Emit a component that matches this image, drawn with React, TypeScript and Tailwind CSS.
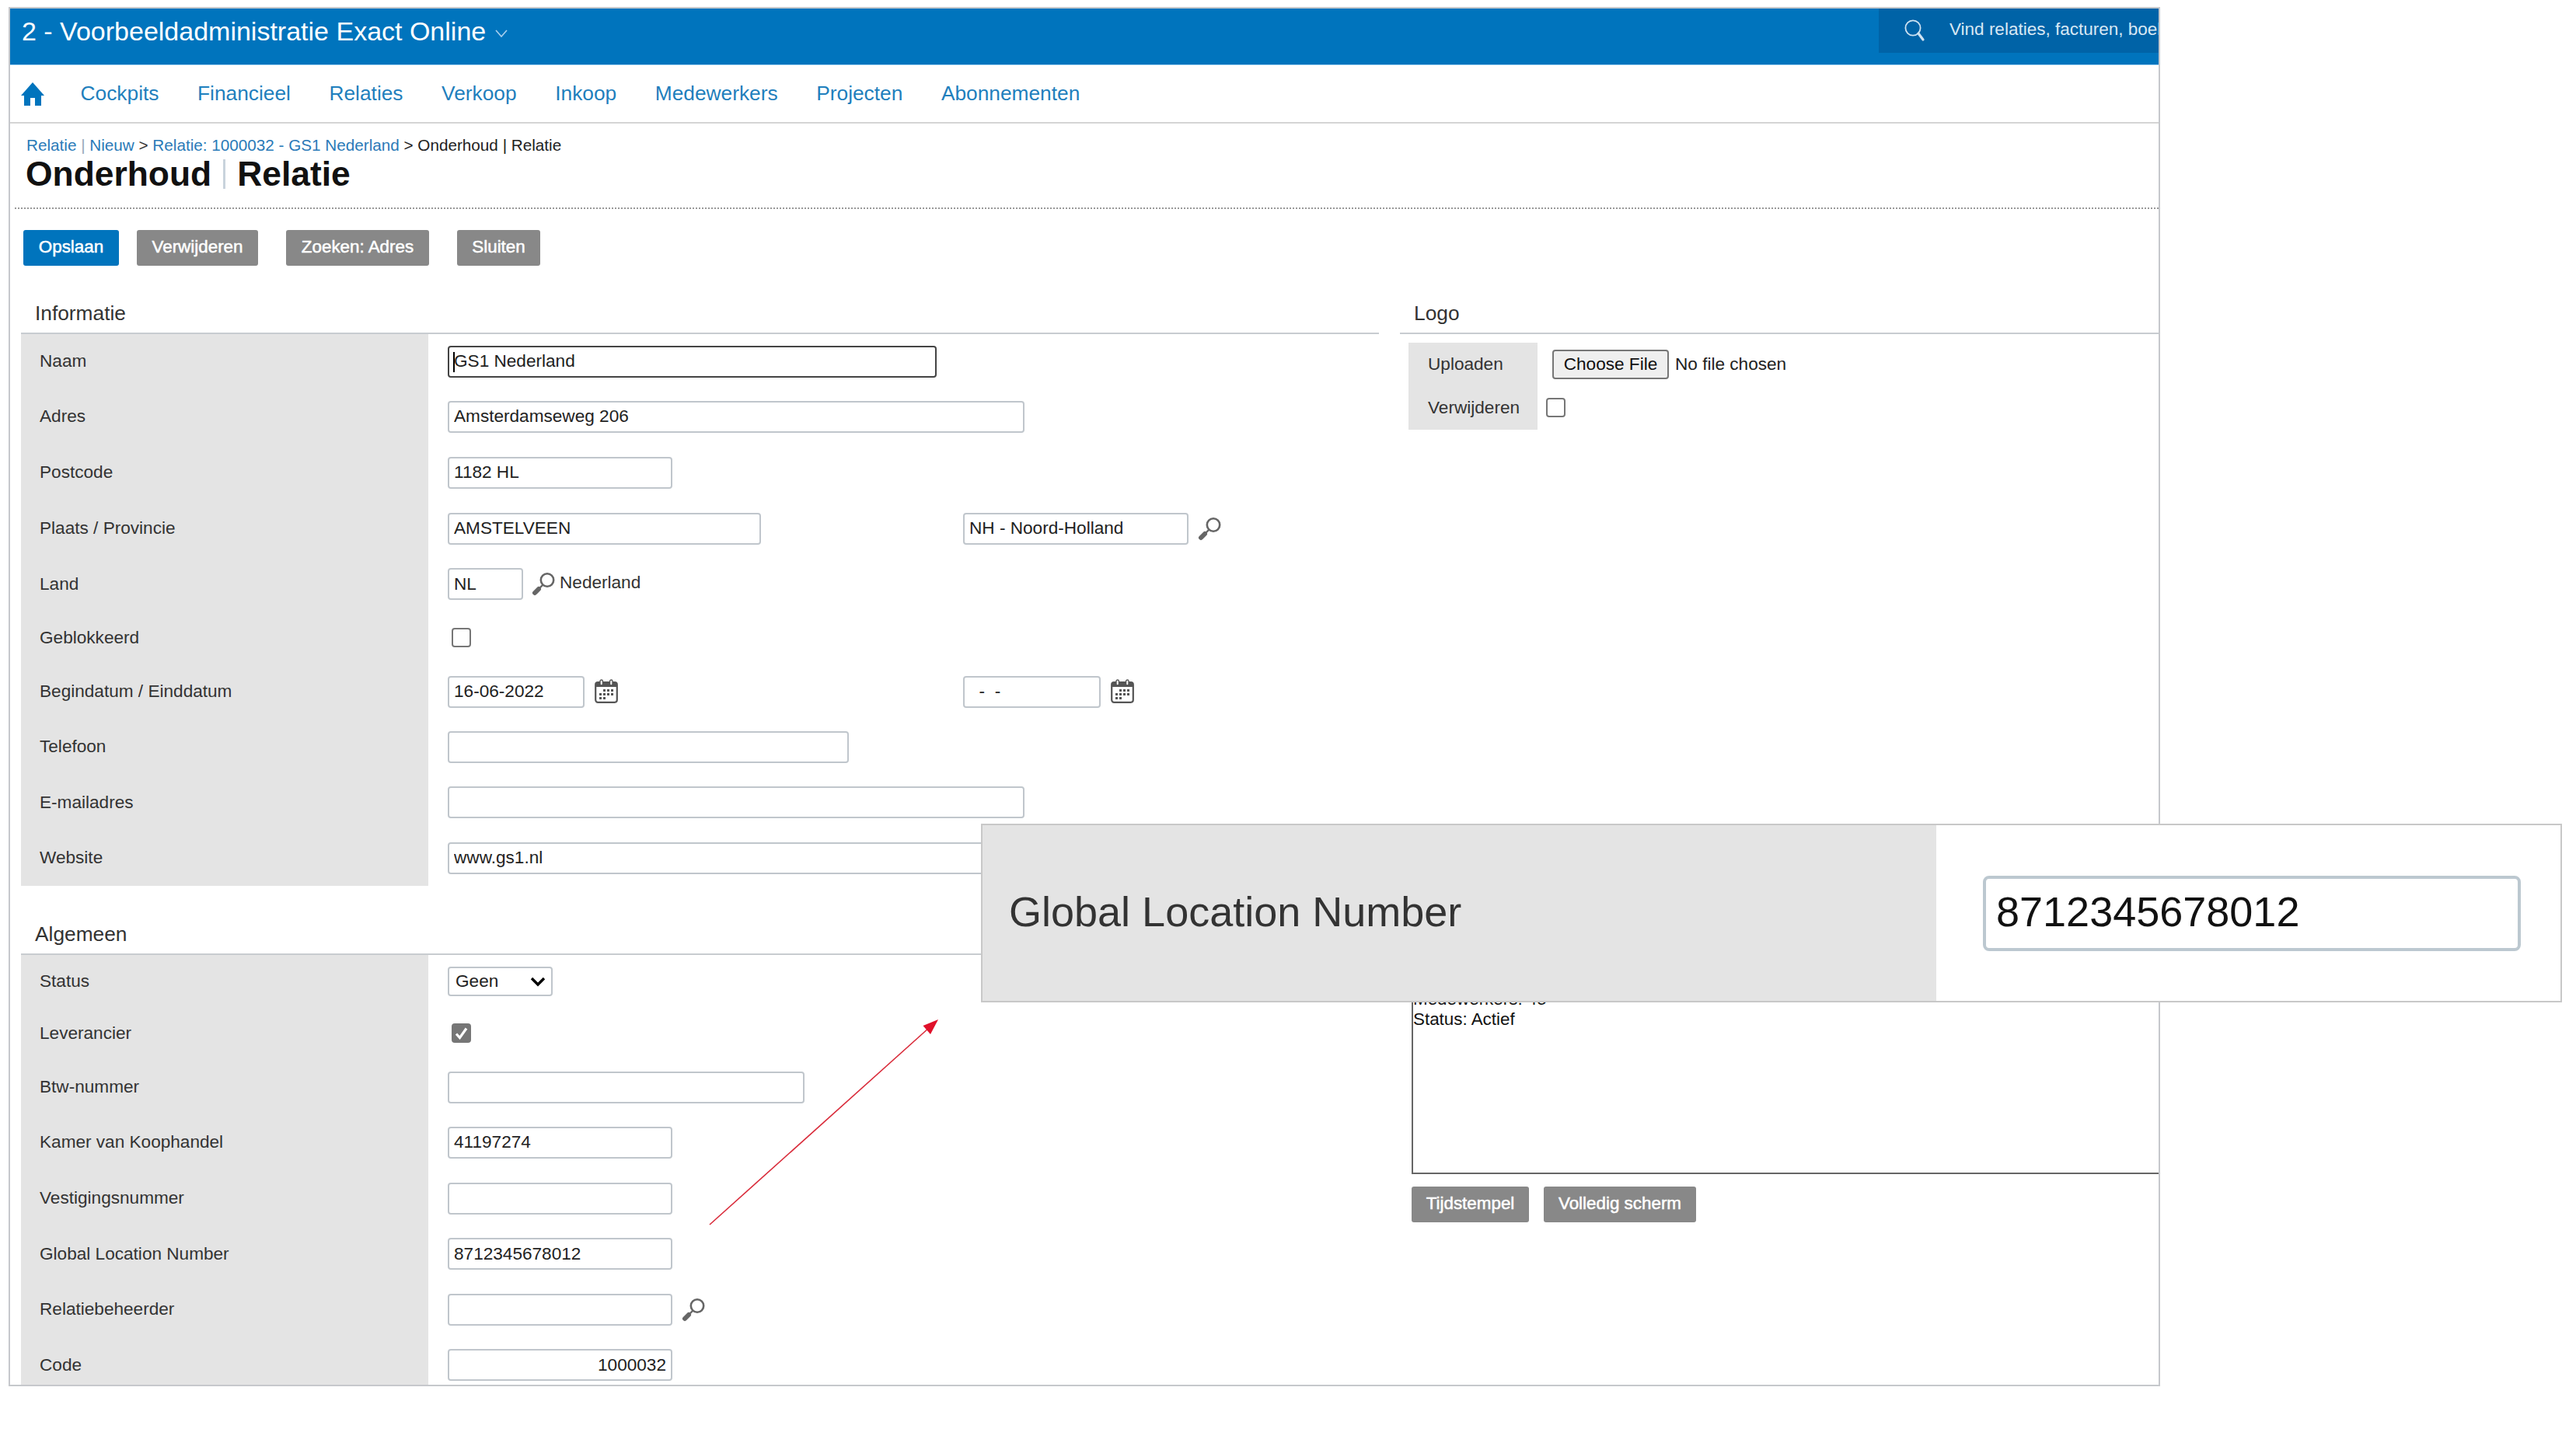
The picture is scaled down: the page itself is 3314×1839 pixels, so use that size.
import React from "react";

const Mag = () => (
  <svg width="30" height="31" viewBox="0 0 30 31" className="shrink-0">
    <circle cx="20" cy="10.5" r="8.2" fill="none" stroke="#666" strokeWidth="2.6" />
    <line x1="14" y1="17" x2="9" y2="22" stroke="#666" strokeWidth="2.4" />
    <line x1="9" y1="22" x2="4" y2="27" stroke="#666" strokeWidth="6" strokeLinecap="round" />
  </svg>
);

const Cal = () => (
  <svg width="30" height="31" viewBox="0 0 30 31" className="-mt-[1px] shrink-0">
    <rect x="1.2" y="4" width="27.6" height="25.8" rx="3" fill="none" stroke="#555" strokeWidth="2.2" />
    <rect x="1.2" y="4" width="27.6" height="6" fill="#555" />
    <rect x="7" y="1" width="3.4" height="7" rx="1.7" fill="#fff" stroke="#555" strokeWidth="1.4" />
    <rect x="19.6" y="1" width="3.4" height="7" rx="1.7" fill="#fff" stroke="#555" strokeWidth="1.4" />
    <g fill="#555">
      <rect x="11" y="13" width="3" height="3" />
      <rect x="16" y="13" width="3" height="3" />
      <rect x="21" y="13" width="3" height="3" />
      <rect x="6" y="18" width="3" height="3" />
      <rect x="11" y="18" width="3" height="3" />
      <rect x="16" y="18" width="3" height="3" />
      <rect x="21" y="18" width="3" height="3" />
      <rect x="6" y="23" width="3" height="3" />
      <rect x="11" y="23" width="3" height="3" />
    </g>
  </svg>
);

const Box = ({ checked }: { checked?: boolean }) =>
  checked ? (
    <span className="ml-[5px] -mt-[1px] flex h-[25px] w-[25px] items-center justify-center rounded-[4px] bg-[#767676]">
      <svg width="19" height="19" viewBox="0 0 19 19">
        <path d="M3 10.5 L7.5 15.5 L16 3.5" fill="none" stroke="#fff" strokeWidth="3.2" />
      </svg>
    </span>
  ) : (
    <span className="ml-[5px] -mt-[1px] block h-[25px] w-[25px] rounded-[4px] border-2 border-[#767676] bg-white" />
  );

const Field = ({ w, value, right }: { w: string; value?: string; right?: boolean }) => (
  <input
    readOnly
    value={value ?? ""}
    className={`${w} h-[41px] shrink-0 rounded-[4px] border-2 border-[#c0c6cc] bg-white pl-[6px] pr-[6px] text-[22.6px] text-[#222] outline-none ${right ? "text-right" : ""}`}
  />
);

const Row = ({ h, label, children }: { h: string; label: string; children: React.ReactNode }) => (
  <div className={`flex ${h}`}>
    <div className="flex w-[524px] shrink-0 items-center bg-[#e4e4e4] pl-[24px] text-[22.6px] text-[#333]">{label}</div>
    <div className="flex items-center pl-[25px]">{children}</div>
  </div>
);

const Section = ({ h, title }: { h: string; title: string }) => (
  <div className={`flex ${h} items-end border-b-2 border-[#c8ccd0] pb-[10px] pl-[18px] text-[26.3px] leading-[30px] text-[#333]`}>
    {title}
  </div>
);

const Btn = ({ label, blue, w }: { label: string; blue?: boolean; w: string }) => (
  <span
    className={`flex h-[46px] ${w} items-center justify-center rounded-[3px] pb-[2px] text-[22.4px] text-white [-webkit-text-stroke:0.5px_white] ${blue ? "bg-[#0074bd]" : "bg-[#888888]"}`}
  >
    {label}
  </span>
);

export default function App() {
  return (
    <div className="relative h-[1839px] w-[3314px] overflow-hidden bg-white pl-[11px] pt-[9px] [font-family:Liberation_Sans,sans-serif]">
      <div className="h-[1775px] w-[2768px] overflow-hidden border-2 border-[#c6c8cc] bg-white">
        {/* top bar */}
        <div className="flex h-[73px] items-start justify-between border-b border-[#a8d5f5] bg-[#0074bd]">
          <div className="flex h-[58px] items-center pl-[15px] text-[34px] text-white">
            <span>2 - Voorbeeldadministratie Exact Online</span>
            <svg width="16" height="10" viewBox="0 0 16 10" className="ml-[12px] mt-[6px]">
              <path d="M1 1 L8 9 L15 1" fill="none" stroke="#a8d0ee" strokeWidth="1.6" />
            </svg>
          </div>
          <div className="flex h-[57px] w-[360px] items-center overflow-hidden whitespace-nowrap bg-[#0063a7] pl-[32px] text-[22.5px] text-[#d8e8f4]">
            <svg width="30" height="32" viewBox="0 0 30 32" className="-mt-[2px] shrink-0">
              <circle cx="12" cy="13" r="9.6" fill="none" stroke="#cfe3f2" strokeWidth="1.8" />
              <line x1="19" y1="20" x2="25" y2="28" stroke="#cfe3f2" strokeWidth="3.2" strokeLinecap="round" />
            </svg>
            <span className="ml-[29px] -mt-[3px]">Vind relaties, facturen, boekingen</span>
          </div>
        </div>

        {/* nav */}
        <div className="flex h-[75px] items-center gap-[49.6px] border-b-2 border-[#d5d5d5] pl-[14px] text-[26.3px] text-[#1f7fbd]">
          <svg width="30" height="30" viewBox="0 0 30 30" className="-mr-[3px] shrink-0">
            <path d="M15 0 L30 17 H26 V30 H18 V20 H12 V30 H4 V17 H0 Z" fill="#0074bd" />
          </svg>
          {["Cockpits", "Financieel", "Relaties", "Verkoop", "Inkoop", "Medewerkers", "Projecten", "Abonnementen"].map((n) => (
            <span key={n}>{n}</span>
          ))}
        </div>

        {/* page header */}
        <div className="pl-[20px] pt-[16px]">
          <div className="pl-[1px] text-[20.7px] leading-[24px] text-[#2a7ab8]">
            Relatie <span className="text-[#9ab]">|</span> Nieuw <span className="text-[#333]">&gt;</span> Relatie: 1000032 - GS1 Nederland{" "}
            <span className="text-[#222]">&gt; Onderhoud | Relatie</span>
          </div>
          <div className="flex h-[50px] items-center text-[44.4px] font-bold text-[#111]">
            <span>Onderhoud</span>
            <span className="mx-[15px] h-[38px] w-[3px] bg-[#c9d3dc]" />
            <span>Relatie</span>
          </div>
        </div>
        <div className="ml-[6px] mt-[18px] border-b-2 border-dotted border-[#999]" />

        {/* toolbar */}
        <div className="flex pl-[17px] pt-[27px]">
          <Btn label="Opslaan" blue w="w-[123px]" />
          <span className="ml-[23px]"><Btn label="Verwijderen" w="w-[156px]" /></span>
          <span className="ml-[36px]"><Btn label="Zoeken: Adres" w="w-[184px]" /></span>
          <span className="ml-[36px]"><Btn label="Sluiten" w="w-[107px]" /></span>
        </div>

        {/* columns */}
        <div className="flex">
          <div className="ml-[14px] w-[1747px] shrink-0">
            <Section h="h-[88px]" title="Informatie" />
            <Row h="h-[70px]" label="Naam">
              <div className="relative flex h-[41px] w-[629px] items-center rounded-[4px] border-2 border-[#444] bg-white pl-[6px] text-[22.6px] text-[#222]">
                <span className="absolute left-[5px] top-[6px] h-[26px] w-[2px] bg-black" />
                GS1 Nederland
              </div>
            </Row>
            <Row h="h-[72px]" label="Adres"><Field w="w-[742px]" value="Amsterdamseweg 206" /></Row>
            <Row h="h-[72px]" label="Postcode"><Field w="w-[289px]" value="1182 HL" /></Row>
            <Row h="h-[72px]" label="Plaats / Provincie">
              <div className="w-[663px]"><Field w="w-[403px]" value="AMSTELVEEN" /></div>
              <Field w="w-[290px]" value="NH - Noord-Holland" />
              <span className="ml-[12px]"><Mag /></span>
            </Row>
            <Row h="h-[71px]" label="Land">
              <Field w="w-[97px]" value="NL" />
              <span className="ml-[11px]"><Mag /></span>
              <span className="-mt-[4px] ml-[6px] text-[22.6px] text-[#333]">Nederland</span>
            </Row>
            <Row h="h-[68px]" label="Geblokkeerd"><Box /></Row>
            <Row h="h-[70px]" label="Begindatum / Einddatum">
              <div className="flex w-[663px] items-center">
                <Field w="w-[176px]" value="16-06-2022" />
                <span className="ml-[13px]"><Cal /></span>
              </div>
              <Field w="w-[177px]" value="  -  -" />
              <span className="ml-[13px]"><Cal /></span>
            </Row>
            <Row h="h-[72px]" label="Telefoon"><Field w="w-[516px]" /></Row>
            <Row h="h-[71px]" label="E-mailadres"><Field w="w-[742px]" /></Row>
            <Row h="h-[72px]" label="Website"><Field w="w-[742px]" value="www.gs1.nl" /></Row>

            <Section h="h-[89px]" title="Algemeen" />
            <Row h="h-[67px]" label="Status">
              <div className="relative h-[38px] w-[135px]">
                <select className="h-full w-full appearance-none rounded-[4px] border-2 border-[#c0c6cc] bg-white pl-[8px] text-[22.6px] text-[#222] outline-none">
                  <option>Geen</option>
                </select>
                <svg width="20" height="13" viewBox="0 0 20 13" className="pointer-events-none absolute right-[9px] top-[13px]">
                  <path d="M2 2 L10 10 L18 2" fill="none" stroke="#000" strokeWidth="3.4" />
                </svg>
              </div>
            </Row>
            <Row h="h-[68px]" label="Leverancier"><Box checked /></Row>
            <Row h="h-[70px]" label="Btw-nummer"><Field w="w-[459px]" /></Row>
            <Row h="h-[72px]" label="Kamer van Koophandel"><Field w="w-[289px]" value="41197274" /></Row>
            <Row h="h-[72px]" label="Vestigingsnummer"><Field w="w-[289px]" /></Row>
            <Row h="h-[71px]" label="Global Location Number"><Field w="w-[289px]" value="8712345678012" /></Row>
            <Row h="h-[72px]" label="Relatiebeheerder">
              <Field w="w-[289px]" />
              <span className="ml-[12px]"><Mag /></span>
            </Row>
            <Row h="h-[71px]" label="Code"><Field w="w-[289px]" value="1000032" right /></Row>
          </div>

          <div className="ml-[27px] w-[976px] shrink-0">
            <Section h="h-[88px]" title="Logo" />
            <div className="ml-[11px] mt-[11px]">
              <div className="flex h-[56px] items-center">
                <div className="flex h-full w-[166px] items-center bg-[#e4e4e4] pl-[25px] text-[22.6px] text-[#333]">Uploaden</div>
                <span className="ml-[19px] flex h-[38px] w-[150px] items-center justify-center rounded-[4px] border-2 border-[#767676] bg-[#efefef] text-[22.6px] text-[#111]">
                  Choose File
                </span>
                <span className="ml-[8px] text-[22.6px] text-[#222]">No file chosen</span>
              </div>
              <div className="flex h-[56px] items-center">
                <div className="flex h-full w-[166px] items-center bg-[#e4e4e4] pl-[25px] text-[22.6px] text-[#333]">Verwijderen</div>
                <span className="ml-[6px]"><Box /></span>
              </div>
            </div>
            <div className="ml-[15px] mt-[548px] h-[410px] w-[1100px] border-2 border-[#666] pt-[170px] text-[22.4px] leading-[26px] text-[#111]">
              <div>Medewerkers: 45</div>
              <div>Status: Actief</div>
            </div>
            <div className="ml-[15px] mt-[16px] flex">
              <Btn label="Tijdstempel" w="w-[151px]" />
              <span className="ml-[19px]"><Btn label="Volledig scherm" w="w-[196px]" /></span>
            </div>
          </div>
        </div>
      </div>

      {/* annotation arrow */}
      <svg width="3314" height="1839" className="pointer-events-none absolute left-0 top-0">
        <line x1="913" y1="1576" x2="1196" y2="1322" stroke="#d92b3a" strokeWidth="1.6" />
        <polygon points="1207,1312 1197,1331 1187.5,1320" fill="#e0102a" />
      </svg>

      {/* zoomed callout */}
      <div className="absolute left-[1262px] top-[1060px] flex h-[230px] w-[2034px] border-2 border-[#c8c8c8] bg-white">
        <div className="flex w-[1227px] items-center bg-[#e4e4e4] pb-[3px] pl-[34px] text-[54px] text-[#333]">Global Location Number</div>
        <div className="flex items-center pl-[60px]">
          <div className="flex h-[97px] w-[692px] items-center rounded-[8px] border-4 border-[#bcc8d0] bg-white pb-[3px] pl-[13px] text-[54px] text-[#111]">
            8712345678012
          </div>
        </div>
      </div>
    </div>
  );
}
